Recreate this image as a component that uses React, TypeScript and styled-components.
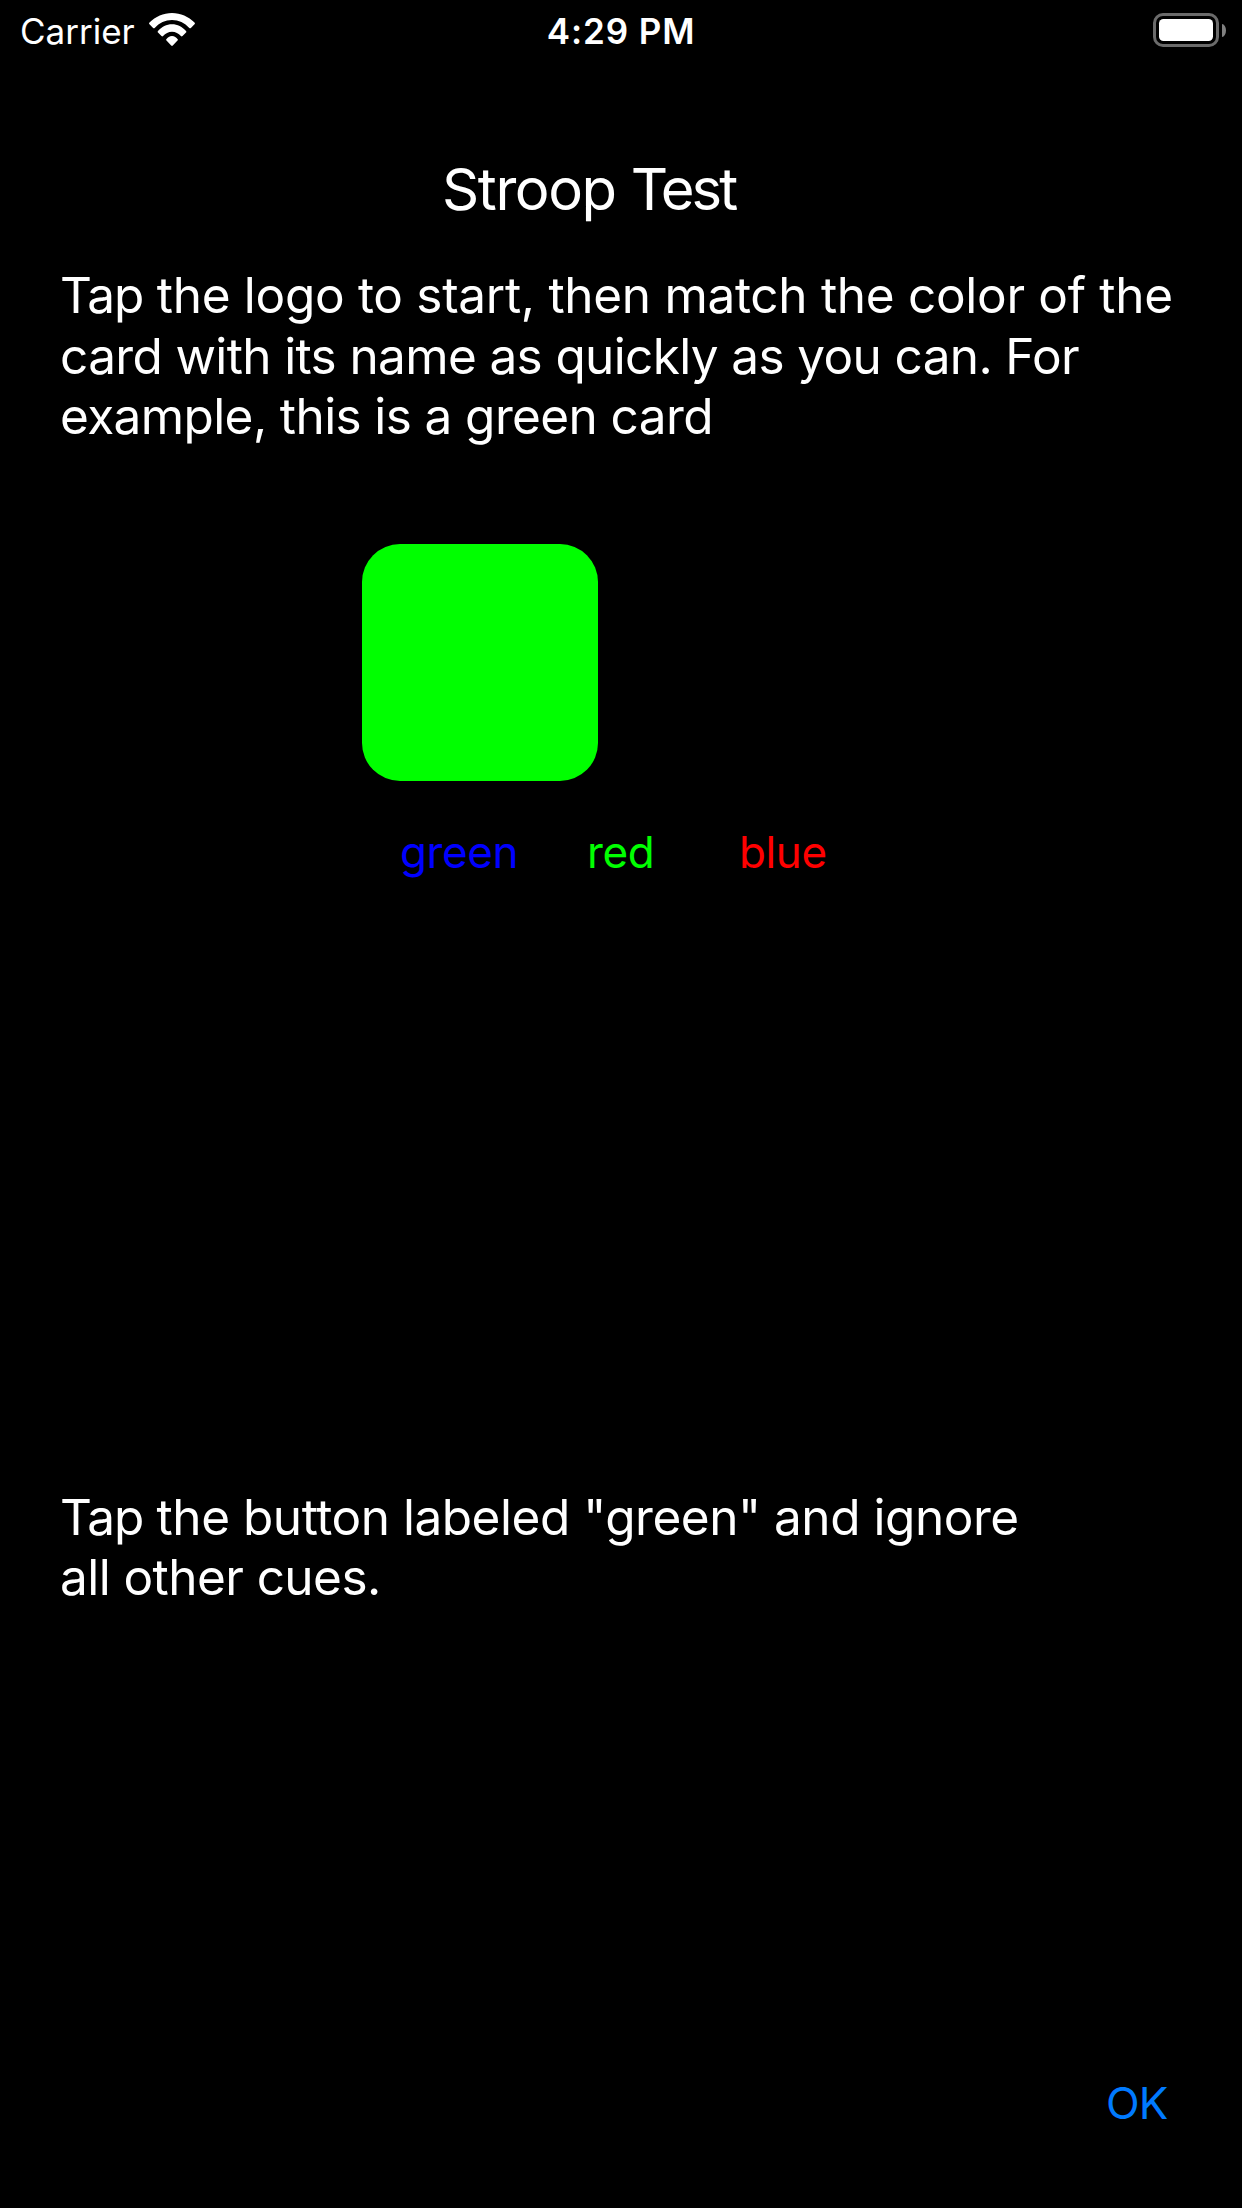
import React from "react";
import styled, { createGlobalStyle } from "styled-components";

const GlobalStyle = createGlobalStyle`
  body {
    margin: 0;
    background: #000;
  }
`;

const Screen = styled.div`
  box-sizing: border-box;
  width: 1242px;
  height: 2208px;
  display: flex;
  flex-direction: column;
  background: #000;
  color: #fff;
  font-family: Inter, "Liberation Sans", sans-serif;
  overflow: hidden;
`;

const StatusBar = styled.header`
  box-sizing: border-box;
  height: 60px;
  flex: none;
  display: grid;
  grid-template-columns: 1fr auto 1fr;
  align-items: start;
  padding: 10px 16px 0 20px;
  font-size: 35px;
  line-height: 42px;
`;

const Network = styled.div`
  display: flex;
  align-items: flex-start;
  gap: 14px;
`;

const WifiIcon = styled.svg`
  display: block;
  width: 46px;
  height: 33px;
  margin-top: 3px;
`;

const Clock = styled.time`
  font-weight: 600;
  letter-spacing: 0.9px;
  padding-right: 4px;
`;

const Battery = styled.div`
  justify-self: end;
  display: flex;
  align-items: center;
  gap: 3px;
  margin-top: 3px;
`;

const BatteryShell = styled.div`
  box-sizing: border-box;
  width: 66px;
  height: 34px;
  padding: 3px;
  border: 3px solid #6b6b6b;
  border-radius: 10px;
`;

const BatteryCharge = styled.div`
  height: 100%;
  border-radius: 4.5px;
  background: #fff;
`;

const BatteryTip = styled.div`
  width: 4px;
  height: 13px;
  border-radius: 0 4px 4px 0 / 0 6.5px 6.5px 0;
  background: #808080;
`;

const Title = styled.h1`
  margin: 94px 0 0 442px;
  font-size: 58px;
  font-weight: 400;
  line-height: 70px;
  letter-spacing: -1.4px;
`;

const Tracked = styled.span<{ $tracking: number }>`
  letter-spacing: ${({ $tracking }) => $tracking}px;
`;

const Paragraph = styled.p<{ $top: number }>`
  margin: ${({ $top }) => $top}px 0 0 60px;
  font-size: 49.5px;
  line-height: 60.5px;
`;

const Line = styled(Tracked)`
  display: block;
  white-space: nowrap;
`;

const Card = styled.div`
  width: 236px;
  height: 237px;
  flex: none;
  margin: 97.5px 0 0 362px;
  border-radius: 38px;
  background: #00ff00;
`;

const Choices = styled.div`
  display: flex;
  gap: 72px;
  margin: 43.5px 0 0 400px;
`;

const TextButton = styled.button<{ $color: string; $tracking?: number }>`
  padding: 0;
  border: 0;
  background: none;
  color: ${({ $color }) => $color};
  font: inherit;
  font-size: 44px;
  line-height: 54px;
  letter-spacing: ${({ $tracking = -0.4 }) => $tracking}px;
`;

const Choice = styled(TextButton)<{ $width: number }>`
  width: ${({ $width }) => $width}px;
  text-align: left;
`;

const Footer = styled.footer`
  display: flex;
  justify-content: flex-end;
  margin-top: auto;
  padding: 0 74.5px 78px 0;
`;

type TextLine = { lead?: string; text: string; tracking: number };

const intro: TextLine[] = [
  { lead: "Tap", text: " the logo to start, then match the color of the", tracking: -0.3 },
  { text: "card with its name as quickly as you can. For", tracking: -0.63 },
  { text: "example, this is a green card", tracking: -0.6 },
];

const hint: TextLine[] = [
  { lead: "Tap", text: ' the button labeled "green" and ignore', tracking: -0.46 },
  { text: "all other cues.", tracking: -0.56 },
];

const choices = [
  { label: "green", color: "#0000ff", width: 115 },
  { label: "red", color: "#00ff00", width: 80 },
  { label: "blue", color: "#ff0000", width: 90 },
];

function Copy({ lines, top }: { lines: TextLine[]; top: number }) {
  return (
    <Paragraph $top={top}>
      {lines.map(({ lead, text, tracking }) => (
        <Line key={text} $tracking={tracking}>
          {lead && <Tracked $tracking={-1.1}>{lead}</Tracked>}
          {text}
        </Line>
      ))}
    </Paragraph>
  );
}

export default function App() {
  return (
    <>
      <GlobalStyle />
      <Screen>
        <StatusBar>
          <Network>
            <span>Carrier</span>
            <WifiIcon viewBox="0 0 46 33" fill="#fff" aria-hidden="true">
              <path d="M.5 9.6C6.5 3.7 14.4 0 23 0s16.500 3.700 22.500 9.600c.6.6.6 1.100 0 1.700l-3.600 3.600c-.6.6-1 .6-1.600 0C35.700 10 29.700 7 23 7S10.300 10 5.700 14.900c-.6.6-1 .6-1.600 0L.5 11.300c-.6-.6-.6-1.100 0-1.700z" />
              <path d="M9 18c3.700-4.100 8.500-6.700 14-6.700S33.300 13.900 37 18c.5.6.5 1 0 1.600l-3.500 3.500c-.6.6-1 .6-1.600 0-2.300-2.600-5.400-4.400-8.900-4.400s-6.600 1.800-8.900 4.400c-.6.6-1 .6-1.600 0L9 19.600c-.5-.6-.5-1 0-1.600z" />
              <path d="M17.300 26.200c1.300-2 3.300-3.300 5.700-3.300s4.400 1.300 5.700 3.300c.3.500.3.900-.2 1.400l-4.700 4.900c-.6.6-1 .6-1.600 0l-4.700-4.900c-.5-.5-.5-.9-.2-1.400z" />
            </WifiIcon>
          </Network>
          <Clock>4:29 PM</Clock>
          <Battery>
            <BatteryShell>
              <BatteryCharge />
            </BatteryShell>
            <BatteryTip />
          </Battery>
        </StatusBar>
        <Title>
          Stroop <Tracked $tracking={-2.9}>Test</Tracked>
        </Title>
        <Copy lines={intro} top={41} />
        <Card />
        <Choices>
          {choices.map(({ label, color, width }) => (
            <Choice key={label} $color={color} $width={width}>
              {label}
            </Choice>
          ))}
        </Choices>
        <Copy lines={hint} top={608} />
        <Footer>
          <TextButton $color="#007aff" $tracking={-0.8}>
            OK
          </TextButton>
        </Footer>
      </Screen>
    </>
  );
}
